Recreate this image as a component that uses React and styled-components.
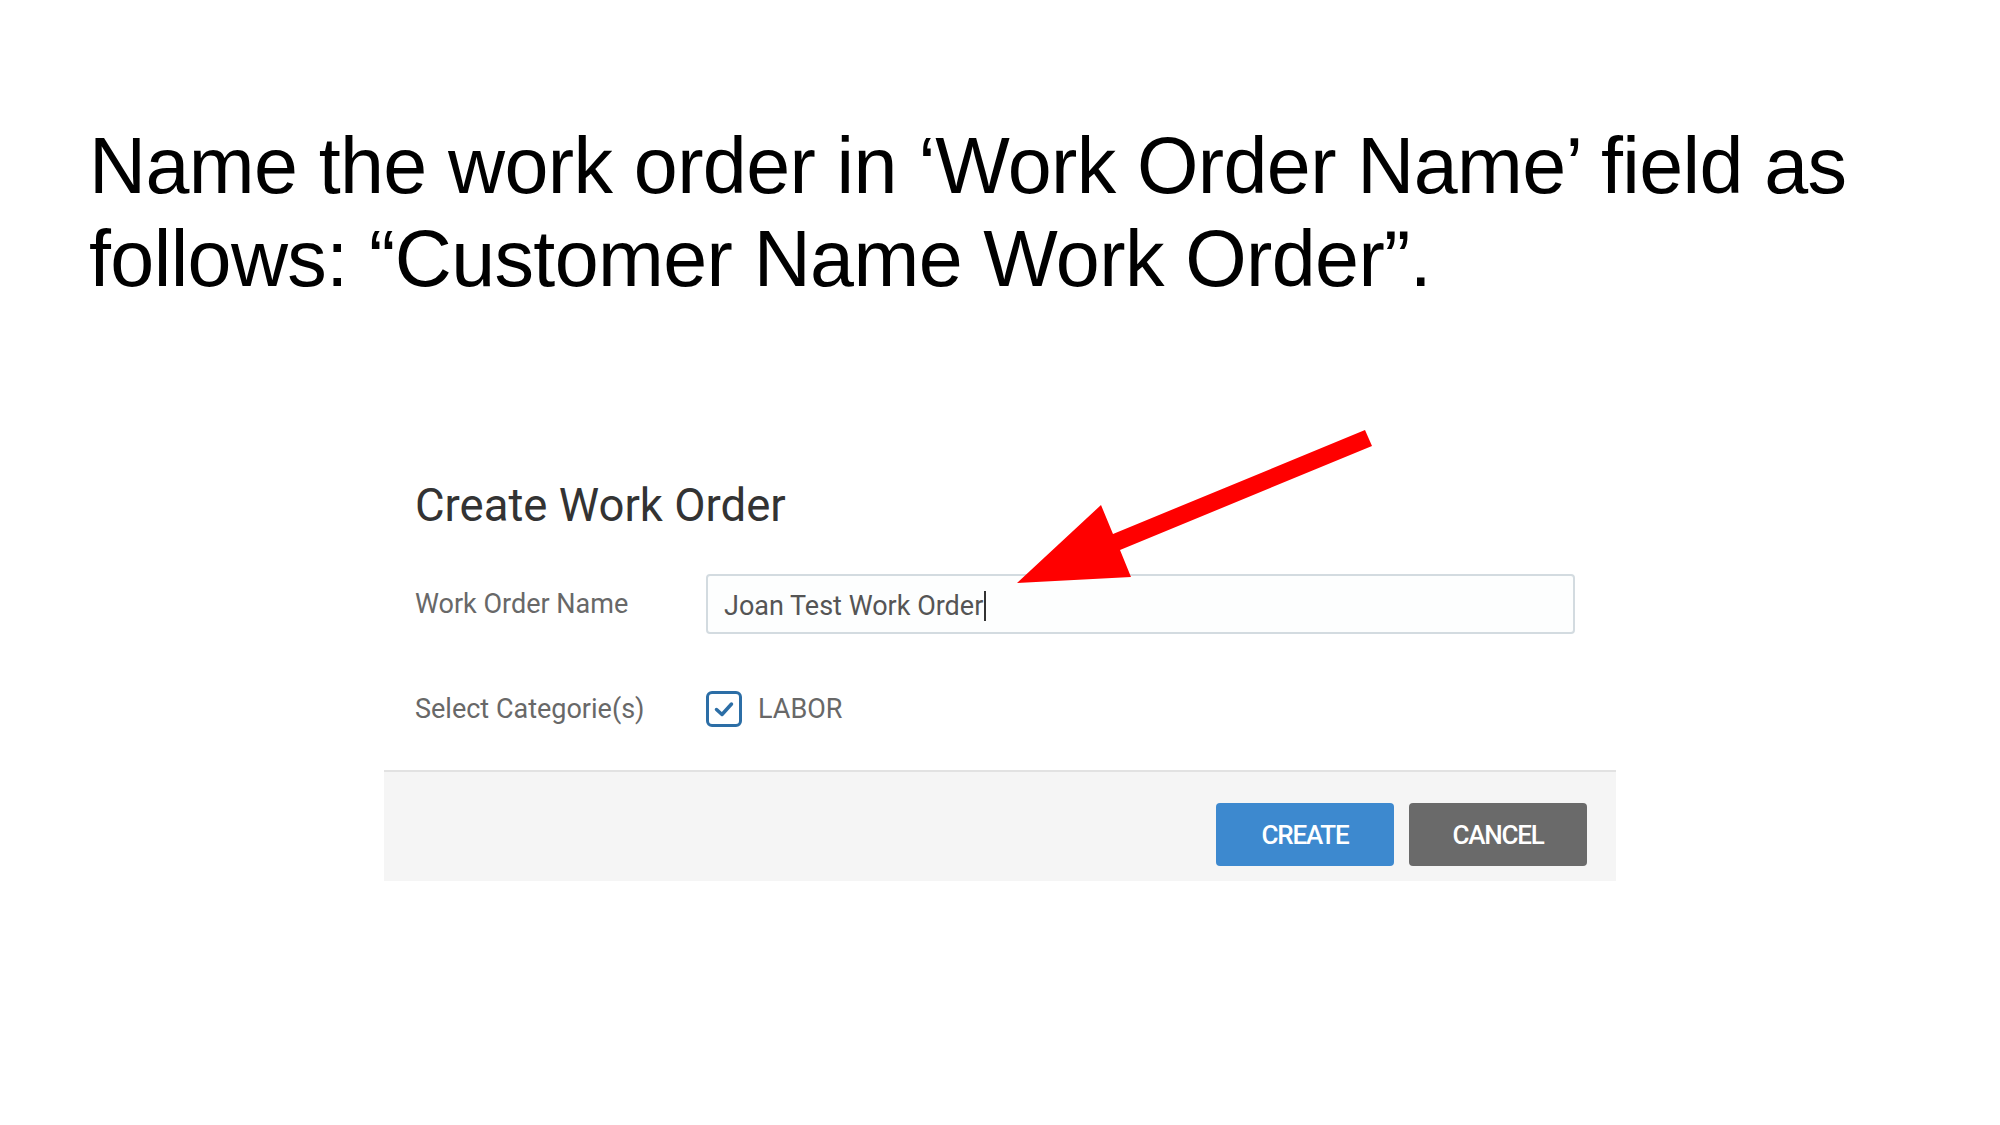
import React from "react";
import styled, { createGlobalStyle } from "styled-components";

const Global = createGlobalStyle`
  html, body { margin: 0; padding: 0; background: #ffffff; }
  body { width: 2000px; height: 1125px; overflow: hidden; }
`;

const Slide = styled.div`
  position: relative;
  width: 2000px;
  height: 1125px;
  background: #ffffff;
  display: flex;
  flex-direction: column;
`;

const Heading = styled.h1`
  margin: 0;
  padding: 119px 100px 0 89px;
  font-family: "Liberation Sans", Arial, sans-serif;
  font-weight: 400;
  font-size: 79px;
  letter-spacing: -0.6px;
  line-height: 93px;
  color: #000000;
`;

const Dialog = styled.section`
  margin: 174px 0 0 384px;
  width: 1232px;
  background: #ffffff;
  font-family: Roboto, "Noto Sans", sans-serif;
  display: flex;
  flex-direction: column;
`;

const Body = styled.div`
  padding: 0 41px 43px 31px;
  display: flex;
  flex-direction: column;
`;

const Title = styled.h2`
  margin: 0 0 41px 0;
  font-weight: 400;
  font-size: 45.5px;
  line-height: 54px;
  color: #333333;
`;

const Row = styled.div`
  display: grid;
  grid-template-columns: 291px 1fr;
  align-items: center;
  margin-top: ${(p) => p.$gap || 0}px;
`;

const Label = styled.div`
  font-size: 27px;
  color: #686868;
  line-height: 32px;
`;

const Input = styled.div`
  height: 60px;
  box-sizing: border-box;
  border: 2px solid #d3dbe0;
  border-radius: 4px;
  padding: 3px 16px 0 16px;
  display: flex;
  align-items: center;
  font-size: 27px;
  color: #555555;
  background: #fdfefe;
`;

const Caret = styled.span`
  display: inline-block;
  width: 2px;
  height: 30px;
  background: #333333;
  margin-left: 1px;
`;

const CheckRow = styled.div`
  display: flex;
  align-items: center;
  gap: 16px;
`;

const Box = styled.span`
  width: 36px;
  height: 36px;
  box-sizing: border-box;
  border: 3.5px solid #2c6ea6;
  border-radius: 6px;
  display: flex;
  align-items: center;
  justify-content: center;
  background: #ffffff;
`;

const CheckText = styled.span`
  font-size: 27px;
  color: #686868;
  line-height: 32px;
`;

const Footer = styled.div`
  border-top: 2px solid #e2e2e2;
  background: #f5f5f5;
  padding: 31px 29px 15px 0;
  display: flex;
  justify-content: flex-end;
  gap: 15px;
`;

const Button = styled.button`
  width: 178px;
  height: 63px;
  border: none;
  border-radius: 4px;
  background: ${(p) => (p.$variant === "primary" ? "#3d89cf" : "#6a6a6a")};
  color: #ffffff;
  font-family: Roboto, "Noto Sans", sans-serif;
  font-weight: 500;
  font-size: 26px;
  letter-spacing: -1.2px;
  text-transform: uppercase;
  padding: 0;
  cursor: pointer;
`;

const ArrowSvg = styled.svg`
  position: absolute;
  left: 0;
  top: 0;
  pointer-events: none;
`;

export default function App() {
  return (
    <>
      <Global />
      <Slide>
        <Heading>
          Name the work order in ‘Work Order Name’ field as follows: “Customer
          Name Work Order”.
        </Heading>
        <Dialog>
          <Body>
            <Title>Create Work Order</Title>
            <Row>
              <Label>Work Order Name</Label>
              <Input>
                Joan Test Work Order
                <Caret />
              </Input>
            </Row>
            <Row $gap={57}>
              <Label>Select Categorie(s)</Label>
              <CheckRow>
                <Box>
                  <svg width="24" height="24" viewBox="0 0 24 24">
                    <path
                      d="M4.5 12.5 L10 17.5 L19.5 7"
                      fill="none"
                      stroke="#2c6ea6"
                      strokeWidth="3.5"
                      strokeLinecap="round"
                      strokeLinejoin="round"
                    />
                  </svg>
                </Box>
                <CheckText>LABOR</CheckText>
              </CheckRow>
            </Row>
          </Body>
          <Footer>
            <Button $variant="primary">Create</Button>
            <Button>Cancel</Button>
          </Footer>
        </Dialog>
        <ArrowSvg width="2000" height="1125" viewBox="0 0 2000 1125">
          <polygon
            points="1365,430 1113,534 1101,505 1017,583 1131,577 1120,550 1372,446"
            fill="#ff0000"
          />
        </ArrowSvg>
      </Slide>
    </>
  );
}
